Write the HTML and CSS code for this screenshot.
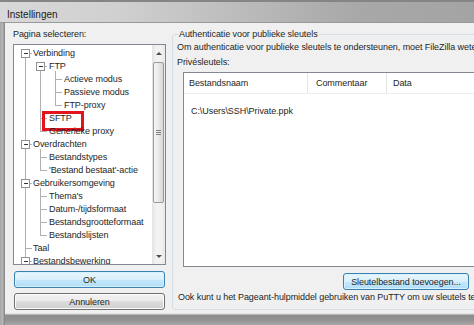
FILE: index.html
```html
<!DOCTYPE html>
<html lang="nl">
<head>
<meta charset="utf-8">
<title>Instellingen</title>
<link rel="stylesheet" href="styles.css">
</head>
<body>
<div class="window">
  <div class="titlebar"><span class="title">Instellingen</span></div>
  <div class="frame">
    <div class="dialog">
      <div class="left">
        <div class="label">Pagina selecteren:</div>
        <div class="tree">
          <div class="tree-content">
            <svg class="tree-lines" width="138" height="219" viewBox="0 0 138 219">
              <g stroke="#b0b0b0" fill="none" shape-rendering="crispEdges">
                <path d="M11.5 8.5V219"/>
                <path d="M26.5 21.5V86.5"/>
                <path d="M41.5 26V60.5"/>
                <path d="M26.5 104V125.5"/>
                <path d="M26.5 143V190.5"/>
                <path d="M11.5 8.5H18M26.5 21.5H33M41.5 34.5H48M41.5 47.5H48M41.5 60.5H48M26.5 73.5H33M26.5 86.5H33M11.5 99.5H18M26.5 112.5H33M26.5 125.5H33M11.5 138.5H18M26.5 151.5H33M26.5 164.5H33M26.5 177.5H33M26.5 190.5H33M11.5 203.5H18M11.5 216.5H18"/>
              </g>
              <g fill="#fff" stroke="#919191" shape-rendering="crispEdges">
                <rect x="7.5" y="4.5" width="8" height="8"/>
                <rect x="22.5" y="17.5" width="8" height="8"/>
                <rect x="7.5" y="95.5" width="8" height="8"/>
                <rect x="7.5" y="134.5" width="8" height="8"/>
                <rect x="7.5" y="212.5" width="8" height="8"/>
              </g>
              <g stroke="#333" shape-rendering="crispEdges">
                <path d="M9.5 8.5H14M24.5 21.5H29M9.5 99.5H14M9.5 138.5H14M9.5 216.5H14"/>
              </g>
            </svg>
            <div class="node l0">Verbinding</div>
            <div class="node l1">FTP</div>
            <div class="node l2">Actieve modus</div>
            <div class="node l2">Passieve modus</div>
            <div class="node l2">FTP-proxy</div>
            <div class="node l1 marked">SFTP</div>
            <div class="node l1">Generieke proxy</div>
            <div class="node l0">Overdrachten</div>
            <div class="node l1">Bestandstypes</div>
            <div class="node l1">'Bestand bestaat'-actie</div>
            <div class="node l0">Gebruikersomgeving</div>
            <div class="node l1">Thema's</div>
            <div class="node l1">Datum-/tijdsformaat</div>
            <div class="node l1">Bestandsgrootteformaat</div>
            <div class="node l1">Bestandslijsten</div>
            <div class="node l0">Taal</div>
            <div class="node l0">Bestandsbewerking</div>
          </div>
          <div class="vscroll">
            <div class="sb-btn"><span class="arrow-up"></span></div>
            <div class="sb-track">
              <div class="thumb"><span class="grip"></span></div>
            </div>
            <div class="sb-btn"><span class="arrow-down"></span></div>
          </div>
        </div>
        <div class="buttons">
          <button class="btn default">OK</button>
          <button class="btn">Annuleren</button>
        </div>
      </div>
      <div class="right">
        <div class="group">
          <div class="legend">Authenticatie voor publieke sleutels</div>
          <div class="group-body">
            <div class="text">Om authenticatie voor publieke sleutels te ondersteunen, moet FileZilla weten welke privésleutels gebruikt moeten worden.</div>
            <div class="text sub">Privésleutels:</div>
            <div class="list">
              <div class="list-head">
                <div class="col c1">Bestandsnaam</div>
                <div class="col c2">Commentaar</div>
                <div class="col c3">Data</div>
              </div>
              <div class="list-body">
                <div class="list-row">C:\Users\SSH\Private.ppk</div>
              </div>
            </div>
            <div class="btn-row">
              <button class="btn default wide">Sleutelbestand toevoegen...</button>
            </div>
            <div class="text note">Ook kunt u het Pageant-hulpmiddel gebruiken van PuTTY om uw sleutels te beheren.</div>
          </div>
        </div>
      </div>
    </div>
  </div>
  <div class="bottom-frame"></div>
</div>
</body>
</html>
```

FILE: styles.css
```css
* { box-sizing: border-box; }

body {
  margin: 0;
  font-family: "Liberation Sans", Arial, sans-serif;
  font-size: 9px;
  letter-spacing: -0.07px;
  color: #1e1e1e;
  background: #9c9c9c;
}

.window {
  width: 474px;
  height: 325px;
  overflow: hidden;
  display: flex;
  flex-direction: column;
  background: linear-gradient(90deg, #a4a6a8 0, #b6b8ba 3px, #8a8a8a 4px, #8a8a8a 5px);
}

.titlebar {
  flex: none;
  height: 23px;
  border-top: 2px solid #858585;
  border-bottom: 1px solid #9a9a9a;
  background: linear-gradient(90deg, #d8d8d8 0%, #d0d0d0 25%, #bcbcbc 50%, #a8a8a8 75%, #a4a4a4 100%);
  padding: 4px 0 0 7px;
  display: flex;
  align-items: center;
}

.title {
  font-size: 10px;
  letter-spacing: 0;
  color: #1a1a1a;
}

.frame {
  flex: none;
  height: 290px;
  padding-left: 5px;
  display: flex;
}

.dialog {
  flex: 1;
  min-width: 0;
  background: #f0f0f0;
  display: flex;
  gap: 6px;
  padding: 5px 0 0 8px;
}

.left {
  flex: none;
  width: 153px;
}

.label {
  line-height: 12px;
  white-space: nowrap;
}

.tree {
  margin-top: 4px;
  height: 221px;
  border: 1px solid #828790;
  background: #fff;
  display: flex;
}

.tree-content {
  position: relative;
  flex: none;
  width: 138px;
  overflow: hidden;
  padding-top: 2px;
}

.tree-lines {
  position: absolute;
  left: 0;
  top: 0;
}

.node {
  position: relative;
  height: 13px;
  line-height: 13px;
  white-space: nowrap;
}

.l0 { padding-left: 19px; }
.l1 { padding-left: 35px; }
.l2 { padding-left: 50px; }

.marked::after {
  content: "";
  position: absolute;
  left: 28px;
  top: -1px;
  width: 36px;
  height: 14px;
  border: 3px solid #e3141c;
}

.vscroll {
  flex: none;
  width: 13px;
  display: flex;
  flex-direction: column;
  background: linear-gradient(90deg, #e3e3e3 0, #f2f2f2 30%, #f2f2f2 70%, #e8e8e8 100%);
}

.sb-btn {
  flex: none;
  height: 16px;
  display: flex;
  align-items: center;
  justify-content: center;
}

.arrow-up {
  width: 0;
  height: 0;
  border-left: 3px solid transparent;
  border-right: 3px solid transparent;
  border-bottom: 3px solid #4d4d4d;
}

.arrow-down {
  width: 0;
  height: 0;
  border-left: 3px solid transparent;
  border-right: 3px solid transparent;
  border-top: 3px solid #4d4d4d;
}

.sb-track {
  flex: 1;
  padding-top: 1px;
}

.thumb {
  height: 141px;
  margin: 0 1px;
  border: 1px solid #9a9a9a;
  border-radius: 2px;
  background: linear-gradient(90deg, #f6f6f6 0%, #e9e9e9 50%, #d6d6d6 100%);
  display: flex;
  align-items: center;
  justify-content: center;
}

.grip {
  width: 5px;
  height: 5px;
  background: repeating-linear-gradient(180deg, #808080 0, #808080 1px, transparent 1px, transparent 2px);
}

.buttons {
  display: flex;
  flex-direction: column;
  gap: 5px;
  margin-top: 6px;
  padding: 0 1px;
}

.btn {
  height: 17px;
  padding: 0;
  font-family: inherit;
  font-size: 9px;
  letter-spacing: -0.07px;
  color: #1e1e1e;
  border: 1px solid #707070;
  border-radius: 3px;
  background: linear-gradient(180deg, #f2f2f2 0%, #ebebeb 50%, #dddddd 50%, #cfcfcf 100%);
  box-shadow: inset 0 0 0 1px #fbfbfb;
}

.btn.default {
  border-color: #3c7fb1;
  background: linear-gradient(180deg, #eaf6fd 0%, #d9f0fc 50%, #c4e8fc 50%, #b2def7 100%);
  box-shadow: inset 0 0 0 1px #d4f2ff;
}

.right {
  flex: none;
  width: 330px;
}

.group {
  margin-top: 6px;
  height: 276px;
  border: 1px solid #d5dfe5;
  border-radius: 3px;
}

.legend {
  width: max-content;
  margin: -7px 0 0 5px;
  padding: 0 1px;
  background: #f0f0f0;
  line-height: 12px;
}

.group-body {
  padding-left: 4px;
}

.text {
  line-height: 12px;
  white-space: nowrap;
  margin-top: 1px;
}

.text.sub {
  margin-top: 3px;
}

.list {
  margin: 4px 0 0 6px;
  width: 310px;
  height: 195px;
  border: 1px solid #828790;
  background: #fff;
}

.list-head {
  display: flex;
  height: 21px;
  border-bottom: 1px solid #eceef0;
}

.col {
  line-height: 20px;
  white-space: nowrap;
}

.c1 {
  width: 124px;
  padding-left: 5px;
  border-right: 1px solid #e2e4e8;
}

.c2 {
  width: 79px;
  padding-left: 8px;
  border-right: 1px solid #e2e4e8;
}

.c3 {
  flex: 1;
  padding-left: 6px;
}

.list-body {
  padding-top: 11px;
}

.list-row {
  padding-left: 7px;
  line-height: 12px;
  white-space: nowrap;
}

.btn-row {
  display: flex;
  margin-top: 6px;
  padding-left: 166px;
}

.btn.wide {
  width: 126px;
}

.text.note {
  margin-top: 1px;
  padding-left: 1px;
}

.bottom-frame {
  flex: 1;
  margin-left: 5px;
  background: linear-gradient(180deg, #e2e2e2 0, #e2e2e2 1px, #8c8c8c 2px, #939393 60%, #a8a8a8 100%);
}
```
